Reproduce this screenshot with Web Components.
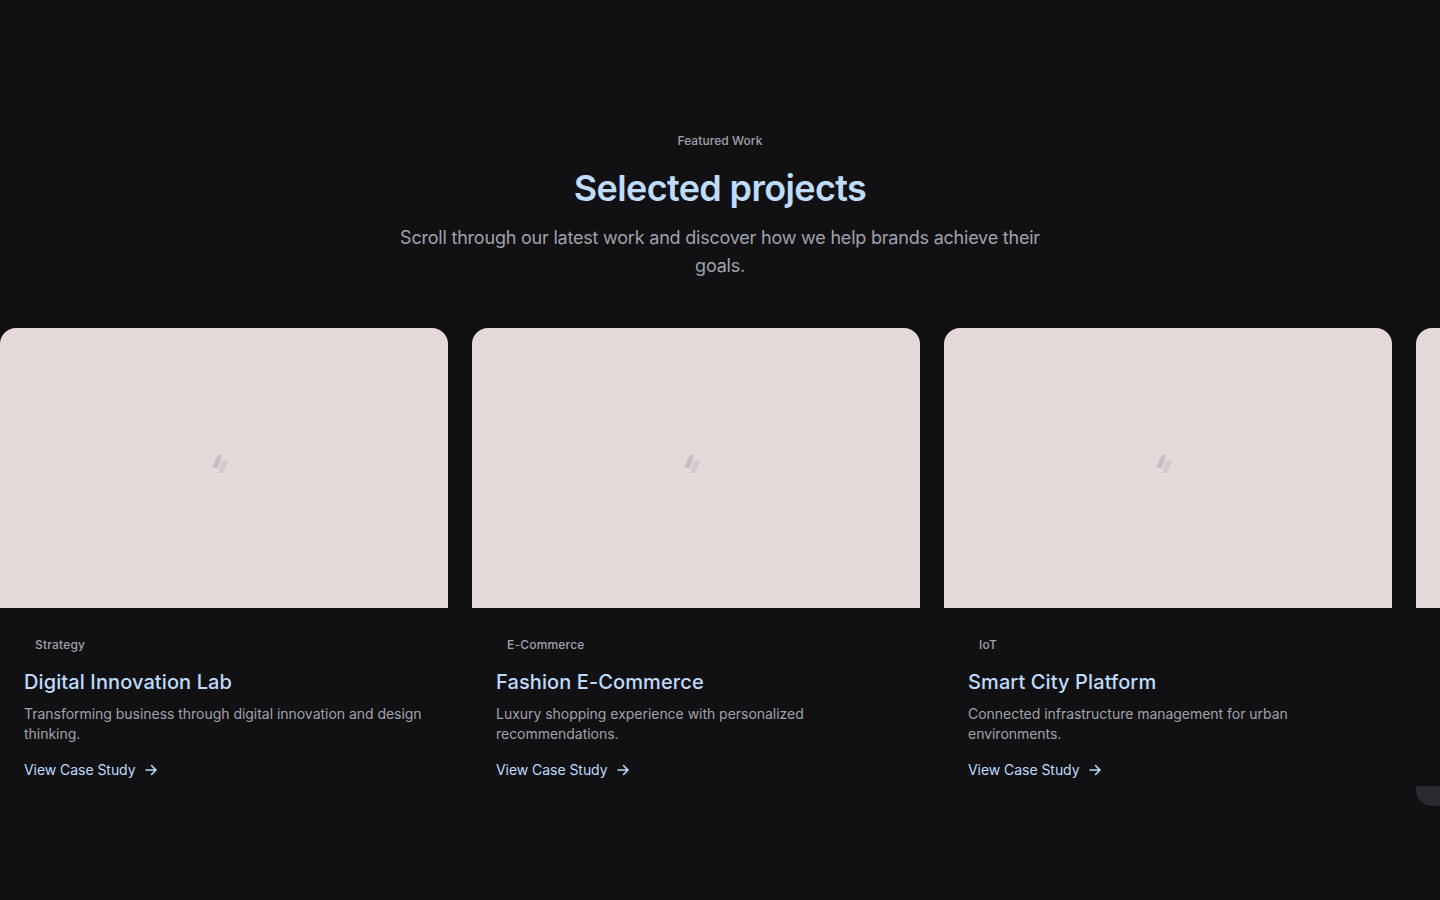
<!doctype html>
<html>
<head>
<meta charset="utf-8">
<title>Selected projects</title>
<style>
    html, body { margin: 0; height: 100%; background: #111114; overflow: hidden; }
    body { font-family: Inter, "Liberation Sans", sans-serif; }
</style>
</head>
<body>
<template id="section-heading">
    <style>
        :host { display: flex; flex-direction: column; align-items: center; text-align: center; }
        .eyebrow { font-size: 12px; line-height: 16px; font-weight: 500; letter-spacing: 0.07px; color: #a1a1aa; }
        h2 { margin: 19px 0 0; font-size: 36px; line-height: 40px; font-weight: 600; letter-spacing: -0.65px; color: #bfdbfe; }
        p { margin: 16px 0 0; width: 672px; font-size: 18px; line-height: 28px; letter-spacing: -0.21px; color: #a1a1aa; }
    </style>
    <div class="eyebrow"><slot name="eyebrow"></slot></div>
    <h2><slot name="title"></slot></h2>
    <p><slot></slot></p>
</template>

<template id="project-card">
    <style>
        :host { display: flex; flex-direction: column; flex: 0 0 448px; height: 478px; border-radius: 16px; overflow: hidden; background: #111113; }
        .thumb { height: 280px; flex: none; background: #e6d9d9; display: flex; align-items: center; justify-content: center; }
        .thumb svg { width: 20px; height: 20px; margin: -10px 8px 0 0; display: block; filter: blur(0.4px); }
        .body { padding: 24px 24px 0; display: flex; flex-direction: column; align-items: flex-start; }
        .tag { font-size: 12px; line-height: 16px; font-weight: 500; letter-spacing: 0.2px; color: #a1a1aa; padding: 5px 11px 0; }
        h3 { margin: 15px 0 0; font-size: 20px; line-height: 28px; font-weight: 500; letter-spacing: 0.1px; color: #bfdbfe; }
        p { margin: 8px 0 0; font-size: 14px; line-height: 20px; letter-spacing: -0.03px; color: #a1a1aa; }
        a { margin-top: 16px; display: inline-flex; align-items: center; gap: 7px; font-size: 14px; line-height: 20px; letter-spacing: -0.05px; color: #bfdbfe; text-decoration: none; }
        a svg { width: 16px; height: 16px; display: block; }
    </style>
    <div class="thumb">
        <svg viewBox="0 0 20 20"><path d="M8 2h4L8 15H2z" fill="#c6c0c5"/><path d="M12 8h6l-5 12H8z" fill="#d0c9ce"/></svg>
    </div>
    <div class="body">
        <span class="tag"><slot name="tag"></slot></span>
        <h3><slot name="title"></slot></h3>
        <p><slot></slot></p>
        <a href="#">View Case Study
            <svg viewBox="0 0 16 16" fill="none" stroke="currentColor" stroke-width="1.500" stroke-linecap="round" stroke-linejoin="round"><path d="M3 8h10M8.500 3.500 13 8l-4.500 4.500"/></svg>
        </a>
    </div>
</template>

<template id="project-tail">
    <style>
        :host { display: flex; flex-direction: column; flex: 0 0 448px; height: 478px; border-radius: 16px; overflow: hidden; background: #111113; }
        .thumb { height: 280px; background: #e6d9d9; }
        .spacer { flex: 1; }
        .foot { height: 20px; background: #2a2a2e; }
    </style>
    <div class="thumb"></div>
    <div class="spacer"></div>
    <div class="foot"></div>
</template>

<template id="projects-section">
    <style>
        :host { display: block; padding-top: 133px; }
        .track { display: flex; gap: 24px; margin-top: 48px; overflow: hidden; }
    </style>
    <slot name="heading"></slot>
    <div class="track"><slot></slot></div>
</template>

<projects-section>
    <section-heading slot="heading">
        <span slot="eyebrow">Featured Work</span>
        <span slot="title">Selected projects</span>
        Scroll through our latest work and discover how we help brands achieve their goals.
    </section-heading>
    <project-card>
        <span slot="tag">Strategy</span>
        <span slot="title">Digital Innovation Lab</span>
        Transforming business through digital innovation and design thinking.
    </project-card>
    <project-card>
        <span slot="tag">E-Commerce</span>
        <span slot="title">Fashion E-Commerce</span>
        Luxury shopping experience with personalized recommendations.
    </project-card>
    <project-card>
        <span slot="tag">IoT</span>
        <span slot="title">Smart City Platform</span>
        Connected infrastructure management for urban environments.
    </project-card>
    <project-tail></project-tail>
</projects-section>

<script>
    (function () {
        function register(name) {
            const template = document.getElementById(name);
            customElements.define(name, class extends HTMLElement {
                constructor() {
                    super();
                    this.attachShadow({ mode: 'open' }).appendChild(template.content.cloneNode(true));
                }
            });
        }
        ['section-heading', 'project-card', 'project-tail', 'projects-section'].forEach(register);
    })();
</script>
</body>
</html>
